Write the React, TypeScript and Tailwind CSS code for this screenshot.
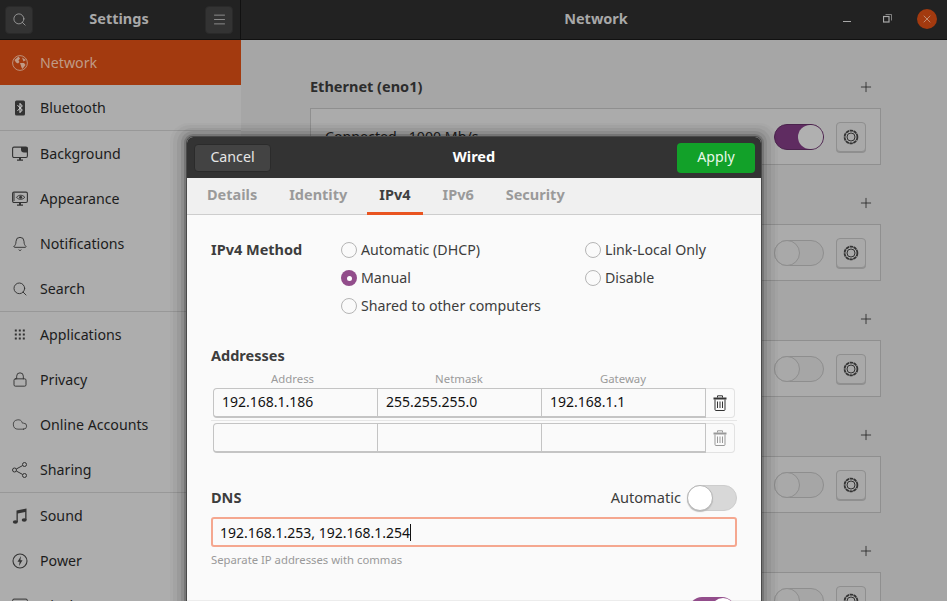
import React from "react";
import { Search, Menu, Bell, Lock, Cloud, Plus, X } from "lucide-react";

const font = "font-['Noto_Sans','Open_Sans',sans-serif]";

function Globe() {
  return (
    <svg width="16" height="16" viewBox="0 0 16 16" fill="none">
      <circle cx="8" cy="8" r="7.4" stroke="#c09a86" strokeWidth="0.9" />
      <path d="M2.5 5 6.5 1.5 8 3.5 6.5 5.5 7.5 7 6 8.5 4 7.5ZM8 8 12 8 13.5 10 10.5 14 9.5 12.5Z M10 2.5 14 5 11.5 6.5Z" fill="#c09a86" />
    </svg>
  );
}

function BluetoothIcon() {
  return (
    <svg width="16" height="16" viewBox="0 0 16 16" fill="none">
      <rect x="3" y="0.5" width="10" height="15" rx="1.5" fill="#333" />
      <path d="M5.5 5.2 10.3 10 8 12.6V3.4L10.3 6 5.5 10.8" stroke="#ddd" strokeWidth="1" />
    </svg>
  );
}

function BackgroundIcon() {
  return (
    <svg width="16" height="16" viewBox="0 0 16 16" fill="none">
      <path d="M5 13.5h6v1.2H5zM7 11.5h2v2H7z" fill="#333" />
      <rect x="0.6" y="1.1" width="14.8" height="10.4" rx="1.4" stroke="#333" strokeWidth="1.1" />
      <path d="M9 1h5.5A1 1 0 0 1 15.5 2v4.5H12A3 3 0 0 1 9 3.5Z" fill="#333" />
    </svg>
  );
}

function AppearanceIcon() {
  return (
    <svg width="16" height="16" viewBox="0 0 16 16" fill="none">
      <path d="M5 13.5h6v1.2H5zM7 11.5h2v2H7z" fill="#333" />
      <rect x="0.6" y="1.1" width="14.8" height="10.4" rx="1.4" stroke="#333" strokeWidth="1.1" />
      <path d="M1 3h2M1 5h2M1 7h2M1 9h2" stroke="#333" strokeWidth="1" />
      <path d="M4.5 6.3C6.5 3.6 10.5 3.6 12.8 6.3 10.5 9 6.5 9 4.5 6.3Z" stroke="#333" strokeWidth="1" />
      <circle cx="8.6" cy="6.3" r="1.5" fill="#333" />
    </svg>
  );
}

function AppsIcon() {
  return (
    <svg width="16" height="16" viewBox="0 0 16 16" fill="#333">
      {[3, 7, 11].map((y) =>
        [3, 7, 11].map((x) => <rect key={x + "-" + y} x={x - 0.2} y={y - 0.5} width="2" height="2" />)
      )}
    </svg>
  );
}

function SharingIcon() {
  return (
    <svg width="16" height="16" viewBox="0 0 16 16" fill="none" stroke="#333" strokeWidth="1">
      <circle cx="2.5" cy="8" r="2" />
      <circle cx="12.5" cy="2.5" r="2" />
      <circle cx="12.5" cy="13.5" r="2" />
      <path d="M4.3 7 10.7 3.5M4.3 9 10.7 12.5" />
    </svg>
  );
}

function MusicIcon() {
  return (
    <svg width="16" height="16" viewBox="0 0 16 16" fill="#333">
      <path d="M4.5 2.5 14.5 0.5V12h-1.3V4L5.8 5.5V14H4.5Z" />
      <ellipse cx="3.3" cy="14" rx="2.5" ry="1.8" />
      <ellipse cx="12.2" cy="12" rx="2.5" ry="1.8" />
    </svg>
  );
}

function PowerIcon() {
  return (
    <svg width="16" height="16" viewBox="0 0 16 16" fill="none">
      <circle cx="8" cy="8" r="7" stroke="#333" strokeWidth="1.1" />
      <path d="M9 3 5.5 8.8H7.6L7 13 10.5 7.2H8.4Z" fill="#333" />
    </svg>
  );
}

function Gear() {
  return (
    <svg width="16" height="16" viewBox="0 0 16 16" fill="none" stroke="#333">
      <circle cx="8" cy="8" r="6.4" strokeWidth="1.8" strokeDasharray="3.4 0.6" />
      <circle cx="8" cy="8" r="4" strokeWidth="1" />
    </svg>
  );
}

function TrashIcon({ color }: { color: string }) {
  return (
    <svg width="14" height="16" viewBox="0 0 14 16" fill="none" stroke={color}>
      <path d="M0.5 3.5h13" strokeWidth="2" />
      <path d="M4.5 2.5V.8h5v1.7" strokeWidth="1" />
      <path d="M2 4.5v10a1 1 0 0 0 1 1h8a1 1 0 0 0 1-1v-10" strokeWidth="1" />
      <path d="M4.5 6.5v6.5M7 6.5v6.5M9.5 6.5v6.5" strokeWidth="1" />
    </svg>
  );
}

const groups: [React.ReactNode, string][][] = [
  [
    [<Globe />, "Network"],
    [<BluetoothIcon />, "Bluetooth"],
  ],
  [
    [<BackgroundIcon />, "Background"],
    [<AppearanceIcon />, "Appearance"],
    [<Bell size={16} strokeWidth={1.4} color="#333" />, "Notifications"],
    [<Search size={16} strokeWidth={1.4} color="#333" />, "Search"],
  ],
  [
    [<AppsIcon />, "Applications"],
    [<Lock size={17} strokeWidth={1.4} color="#333" />, "Privacy"],
    [<Cloud size={17} strokeWidth={1.2} color="#333" />, "Online Accounts"],
    [<SharingIcon />, "Sharing"],
  ],
  [
    [<MusicIcon />, "Sound"],
    [<PowerIcon />, "Power"],
    [<svg width="16" height="16" viewBox="0 0 16 16" fill="none" stroke="#333"><rect x="0.6" y="1.1" width="14.8" height="10.4" rx="1.4" /></svg>, "Displays"],
  ],
];

function Sidebar() {
  return (
    <aside className="w-[241px] shrink-0 bg-[#adadad]">
      {groups.map((group, i) => (
        <div key={i} className="border-b border-[#989898]">
          {group.map(([icon, label]) => (
            <div
              key={label}
              className={
                label === "Network"
                  ? "h-[45px] flex items-center gap-[12px] pl-[12px] bg-[#a33a0f] text-[#c09a86]"
                  : "h-[45px] flex items-center gap-[12px] pl-[12px] text-[#1c1c1c]"
              }
            >
              <span className="w-[16px] h-[16px] flex items-center justify-center">{icon}</span>
              <span className="text-[14.2px]">{label}</span>
            </div>
          ))}
        </div>
      ))}
    </aside>
  );
}

function BgToggle({ on }: { on?: boolean }) {
  return (
    <div
      className={
        on
          ? "w-[50px] h-[26px] rounded-full bg-[#5f2c61] border border-[#4b234d] flex justify-end"
          : "w-[50px] h-[26px] rounded-full bg-[#a6a6a6] border border-[#8e8e8e] flex"
      }
    >
      <div className={on ? "w-[25px] h-[24px] rounded-full bg-[#b0b0b0]" : "w-[26px] h-[26px] rounded-full bg-[#a9a9a9] border border-[#8e8e8e] -ml-px -mt-px"} />
    </div>
  );
}

function Section({ title, on, text }: { title?: string; on?: boolean; text?: string }) {
  return (
    <section className="mb-[16px]">
      <div className="h-[43px] flex items-center justify-between pr-[7px]">
        <h2 className="text-[14.5px] font-bold text-[#2c2c2c]">{title}</h2>
        <Plus size={16} strokeWidth={1.2} color="#222" />
      </div>
      <div className="h-[57px] border border-[#8f8f8f] bg-[#ababab] flex items-center justify-between pl-[14px] pr-[14px]">
        <span className="text-[14.2px] text-[#222]">{text}</span>
        <div className="flex items-center gap-[12px]">
          <BgToggle on={on} />
          <div className="w-[30px] h-[30px] rounded-[4px] border border-[#8f8f8f] bg-[#a9a9a9] shadow-[0_1px_0_#8f8f8f] flex items-center justify-center">
            <Gear />
          </div>
        </div>
      </div>
    </section>
  );
}

function Radio({ label, checked }: { label: string; checked?: boolean }) {
  return (
    <div className="h-[28px] flex items-center gap-[4px] text-[14.2px] text-[#3d3d3d]">
      {checked ? (
        <span className="w-[16px] h-[16px] rounded-full bg-[#924d8b] flex items-center justify-center">
          <span className="w-[5px] h-[5px] rounded-full bg-white" />
        </span>
      ) : (
        <span className="w-[16px] h-[16px] rounded-full border border-[#b5b5b5] bg-[#fafafa]" />
      )}
      {label}
    </div>
  );
}

function AddressRow({ values, active }: { values: string[]; active?: boolean }) {
  return (
    <div className="ml-[2px] w-[522px] h-[30px] flex">
      <div className="flex-1 flex border border-[#c4c4c4] rounded-l-[4px] border-b-2 text-[14px] text-[#111]">
        {[0, 1, 2].map((i) => (
          <div key={i} className={i < 2 ? "w-[164px] border-r border-[#c4c4c4] pl-[8px] leading-[26px]" : "flex-1 pl-[8px] leading-[26px]"}>
            {values[i]}
          </div>
        ))}
      </div>
      <div className="w-[29px] border border-l-0 border-[#e2e2e2] rounded-r-[4px] flex items-center justify-center">
        <TrashIcon color={active ? "#333" : "#999"} />
      </div>
    </div>
  );
}

function Dialog() {
  const tabs = ["Details", "Identity", "IPv4", "IPv6", "Security"];
  return (
    <div className="absolute left-[187px] top-[137px] w-[574px] h-[500px] rounded-t-[6px] bg-[#fafafa] shadow-[0_0_0_1px_#4a4a4a,0_0_0_3px_rgba(0,0,0,0.16),0_0_0_6px_rgba(0,0,0,0.08),0_1px_0_10px_rgba(0,0,0,0.05),0_2px_0_14px_rgba(0,0,0,0.03),0_3px_0_17px_rgba(0,0,0,0.02)]">
      <header className="h-[41px] bg-[#333333] rounded-t-[6px] flex items-center justify-between pl-[7px] pr-[6px] relative">
        <button className="w-[77px] h-[28px] pb-[2px] rounded-[4px] bg-[#434343] border border-[#2b2b2b] text-[14.2px] text-[#e6e6e6]">Cancel</button>
        <span className="absolute left-0 right-0 -mt-[2px] text-center text-[14.5px] font-bold text-white">Wired</span>
        <button className="relative w-[78px] h-[30px] pb-[2px] rounded-[4px] bg-[#12a129] text-[14.2px] text-[#e8f8ea]">Apply</button>
      </header>
      <nav className="h-[37px] bg-[#f0f0f0] border-b border-[#cdcdcd] flex gap-[8px] pl-[8px]">
        {tabs.map((t) => (
          <div
            key={t}
            className={
              t === "IPv4"
                ? "h-[37px] px-[12px] flex items-center text-[14.5px] font-bold text-[#404040] border-b-[3px] border-[#e95420]"
                : "h-[37px] px-[12px] flex items-center text-[14.5px] font-bold text-[#9a9a9a] border-b-[3px] border-transparent"
            }
          >
            {t}
          </div>
        ))}
      </nav>
      <div className="pl-[24px] pr-[24px] pt-[21px]">
        <div className="flex">
          <div className="w-[130px] h-[28px] flex items-center text-[14.5px] font-bold text-[#3d3d3d]">IPv4 Method</div>
          <div className="w-[244px]">
            <Radio label="Automatic (DHCP)" />
            <Radio label="Manual" checked />
            <Radio label="Shared to other computers" />
          </div>
          <div>
            <Radio label="Link-Local Only" />
            <Radio label="Disable" />
          </div>
        </div>
        <h3 className="mt-[25px] h-[20px] leading-[20px] text-[14.5px] font-bold text-[#3d3d3d]">Addresses</h3>
        <div className="mt-[6px] mb-[1px] ml-[2px] h-[16px] flex text-[11.4px] leading-[16px] text-[#9a9a9a]">
          <div className="w-[164px] pr-[5px] text-center">Address</div>
          <div className="w-[164px] text-center">Netmask</div>
          <div className="w-[164px] text-center">Gateway</div>
        </div>
        <AddressRow values={["192.168.1.186", "255.255.255.0", "192.168.1.1"]} active />
        <div className="h-[3px] border-b border-[#e6e6e6] mb-[2px]" />
        <AddressRow values={["", "", ""]} />
        <div className="mt-[32px] h-[26px] flex items-center justify-between">
          <h3 className="text-[14.5px] font-bold text-[#3d3d3d]">DNS</h3>
          <div className="flex items-center gap-[6px] text-[14.6px] text-[#3d3d3d]">
            Automatic
            <div className="w-[50px] h-[26px] rounded-full bg-[#d8d8d8] border border-[#cdcdcd]">
              <div className="w-[26px] h-[26px] -ml-px -mt-px rounded-full bg-white border border-[#b5b5b5] shadow-[0_1px_1px_#bbb]" />
            </div>
          </div>
        </div>
        <div className="mt-[6px] h-[30px] rounded-[3px] border-2 border-[#f5a78f] pl-[7px] flex items-center text-[14px] text-[#111]">
          192.168.1.253, 192.168.1.254
          <span className="w-px h-[17px] bg-[#111]" />
        </div>
        <p className="mt-[5px] h-[15px] leading-[15px] text-[11.3px] text-[#999999]">Separate IP addresses with commas</p>
        <div className="mt-[33px] -mx-[24px] border-t border-[#ececec] pr-[26px] flex justify-end">
          <div className="w-[46px] h-[26px] rounded-full bg-[#924d8b] -mt-[4px] flex justify-end">
            <div className="w-[24px] h-[24px] mt-px rounded-full bg-white" />
          </div>
        </div>
      </div>
    </div>
  );
}

export default function App() {
  return (
    <div className={`relative w-[947px] h-[601px] overflow-hidden flex flex-col bg-[#a6a6a6] ${font}`}>
      <div className="h-[40px] shrink-0 bg-[#222222] border-b border-[#111] flex">
        <div className="w-[241px] shrink-0 border-r border-[#111] flex items-center justify-between pl-[5px] pr-[7px]">
          <div className="w-[28px] h-[28px] rounded-[4px] bg-[#333] border border-[#2a2a2a] flex items-center justify-center">
            <Search size={15} strokeWidth={1.3} color="#a8a8a8" />
          </div>
          <span className="-mt-[2px] text-[14.5px] font-bold text-[#a8a8a8]">Settings</span>
          <div className="w-[28px] h-[28px] rounded-[4px] bg-[#333] border border-[#2a2a2a] flex items-center justify-center">
            <Menu size={15} strokeWidth={1.2} color="#a8a8a8" />
          </div>
        </div>
        <div className="flex-1 relative flex items-center justify-center">
          <span className="ml-[4px] -mt-[2px] text-[14.5px] font-bold text-[#a8a8a8]">Network</span>
          <div className="absolute right-[10px] top-[9px] flex items-center">
            <div className="w-[8px] h-px mt-[4px] mr-[32px] bg-[#a8a8a8]" />
            <svg className="mr-[25px] -mt-[1px]" width="9" height="9" viewBox="0 0 9 9" fill="none" stroke="#a8a8a8"><rect x="0.5" y="2.5" width="5.5" height="5.5" strokeWidth="1.2" /><path d="M2.5 .5h6V6.5" strokeWidth="0.7" /></svg>
            <div className="w-[20px] h-[20px] rounded-full bg-[#a33a0f] flex items-center justify-center">
              <X size={12} strokeWidth={1.6} color="#c9a08c" />
            </div>
          </div>
        </div>
      </div>
      <div className="flex flex-1 min-h-0">
        <Sidebar />
        <main className="flex-1 pl-[69px] pr-[66px] pt-[25px]">
          <Section title="Ethernet (eno1)" on text="Connected - 1000 Mb/s" />
          <Section />
          <Section />
          <Section />
          <Section />
        </main>
      </div>
      <Dialog />
    </div>
  );
}
